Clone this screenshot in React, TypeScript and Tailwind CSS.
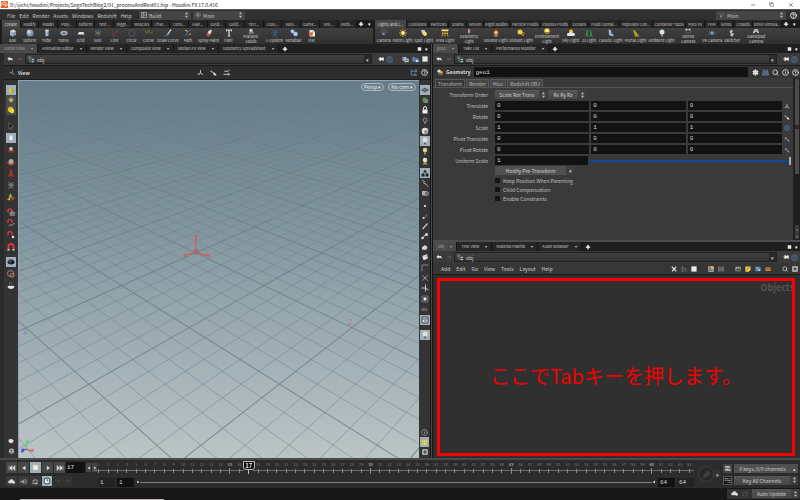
import React, { useState } from 'react';
import { Minus, Plus, Copy, X, CircleHelp, Info, Search, Settings, Pin, KeyRound, RefreshCw } from 'lucide-react';

/* ---------- glyphs, all on a 16x16 canvas ---------- */

const glyphs: Record<string, React.ReactNode> = {
  box: <><path d="M2 4 8 1l6 3v8l-6 3-6-3z" fill="#8b97a5" /><path d="M2 4l6 3 6-3-6-3z" fill="#d5dbe2" /><path d="M8 7v8l-6-3V4z" fill="#aab4c0" /></>,
  sphere: <><circle cx="8" cy="8" r="7" fill="#8795a8" /><circle cx="6" cy="5.5" r="4" fill="#c6ced9" /></>,
  tube: <><path d="M4 3h8v10c0 2-8 2-8 0z" fill="#6c7f96" /><path d="M6 3h3v11H6z" fill="#bdc9d6" /><ellipse cx="8" cy="3" rx="4" ry="2" fill="#cdd5de" /></>,
  torus: <ellipse cx="8" cy="8" rx="5.5" ry="3" fill="none" stroke="#a3b3c7" strokeWidth="3.5" />,
  grid: <path d="M4 6h9l2 5H1z" fill="#dfe3e6" />,
  nul: <g strokeWidth="1.8"><path d="M8 1v14" stroke="#3f83c9" /><path d="M2 5l12 6" stroke="#c8503c" /><path d="M2 11l12-6" stroke="#4ea34b" /></g>,
  line: <><path d="M3 1v13h12" stroke="#4b4b4b" fill="none" /><path d="M3 14 13 3" stroke="#b24a3a" strokeWidth="1.5" /></>,
  circle: <circle cx="8" cy="8" r="6.5" fill="none" stroke="#506379" strokeWidth="1.5" />,
  curve: <path d="M1 4c3 14 5-7 7-1s3 9 7 2" fill="none" stroke="#9a7a43" strokeWidth="1.6" />,
  draw: <><path d="M1 13c4-3 4 3 8-1" stroke="#3f86d8" strokeWidth="2" fill="none" /><path d="M7 11 14 1" stroke="#dcdcdc" strokeWidth="2.6" /></>,
  path: <><path d="M2 14C7 12 5 5 13 2" stroke="#3f86d8" strokeWidth="2" fill="none" /><path d="M2 3h4v3M9 12l5-3" stroke="#e1b34b" strokeWidth="1.8" fill="none" /></>,
  spray: <><path d="M7 4l5-3 2 3-6 11-5-3z" fill="#d9d9d9" /><path d="M5 8l5 3-2 4-5-3z" fill="#c33b2d" /></>,
  font: <path d="M2 1h12v4h-1.5L11.500 3H9.300v10.500L11 14v1H5v-1l1.700-.5V3H4.500l-1 2H2z" fill="#cfd7df" />,
  solids: <><path d="M8 1l5 4-2 6H5L3 5z" fill="#c9c9c9" /><path d="M1 15l4-5 4 5zM9 10h6v5H9z" fill="#8d8d8d" /></>,
  lsys: <path d="M8 15V6M8 10 3 6M8 10l5-4M8 7 5 2M8 7l4-5M3 6 1 7M13 6l2 1M4 12l4 1 4-1" stroke="#35689e" strokeWidth="1.600" fill="none" />,
  meta: <><circle cx="5" cy="5" r="4" fill="#8fb4e0" /><circle cx="11" cy="10" r="4.500" fill="#a9c6ea" /><circle cx="4" cy="4" r="1.500" fill="#fff" /></>,
  file: <><path d="M3 2h7l4 4v9H3z" fill="#e6e6e6" /><path d="M2 8l8-3-1 8-6 1z" fill="#e46a2e" /></>,
  camera: <><path d="M1 6h11v7H1z" fill="#363f48" /><circle cx="5" cy="4" r="3" fill="none" stroke="#6a7683" /><circle cx="11" cy="5" r="3" fill="none" stroke="#6a7683" /><circle cx="7" cy="10" r="2.500" fill="#78909f" /></>,
  point: <><path d="M8 0v16M0 8h16M2 2l12 12M14 2 2 14" stroke="#e8c631" strokeWidth="1.500" /><circle cx="8" cy="8" r="3.500" fill="#fff6a8" /></>,
  spot: <><path d="M2 2h7l3 6-7 3z" fill="#cfcfcf" /><circle cx="10" cy="10" r="4" fill="#f2dc62" /></>,
  area: <><path d="M1 1h14v3H1z" fill="#f4e68b" /><path d="M4 4 2 15M8 4v11M12 4l2 11M2 9h12" stroke="#e0b51f" strokeWidth="1.500" /></>,
  geolight: <><path d="M8 1c4 3 4 7 2 13H6C4 8 5 4 8 1z" fill="#b89fb4" /><path d="M8 4v10" stroke="#e07830" strokeWidth="2" /></>,
  volume: <><path d="M8 1c5 1 6 6 4 10H4C2 6 4 3 8 1z" fill="#d84f30" /><circle cx="8" cy="7" r="3" fill="#ffd25b" /><path d="M4 11h8v4H4z" fill="#8b8b8b" /></>,
  distant: <><circle cx="6" cy="6" r="5" fill="#f0cf3a" /><path d="M8 9l6 5M11 6l4 4" stroke="#f7ab2f" strokeWidth="2" /></>,
  env: <><circle cx="8" cy="8" r="7.500" fill="#e4c529" /><circle cx="8" cy="7" r="3.500" fill="#fff8c8" /><path d="M2 11h12l-3 3H5z" fill="#6d6420" /></>,
  sky: <><circle cx="8" cy="5" r="4" fill="#f4c53a" /><path d="M2 14a3 3 0 0 1 2-6 4 4 0 0 1 7 0 3 3 0 0 1 3 6z" fill="#dfe6ed" /></>,
  gi: <><path d="M3 3h10l2 12H1z" fill="#3c7d4b" /><path d="M6 4h4v11H6z" fill="#2a4b33" /></>,
  caustic: <path d="M3 1l5 1 1 7 5 3-3 3-7-3z" fill="#9fb2d6" />,
  portal: <path d="M2 2l4 1 9 12H6z" fill="#a3a32b" />,
  bulb: <><circle cx="8" cy="6" r="5" fill="#d3ebe8" /><path d="M6 10h4v5H6z" fill="#999" /></>,
  stereo: <><path d="M1 7h14v7H1z" fill="#56616c" /><circle cx="4" cy="4" r="3" fill="#c6c6c6" /><circle cx="12" cy="4" r="3" fill="#c6c6c6" /><circle cx="5" cy="10" r="2" fill="#1d2329" /><circle cx="11" cy="10" r="2" fill="#1d2329" /></>,
  vr: <><path d="M1 6c4-4 10-4 14 0v6H1z" fill="#46525e" /><circle cx="8" cy="8" r="3" fill="#83a0bd" /></>,
  switcher: <path d="M6 1l4 3-3 3 5 3-3 5-5-2 2-3-3-4z" fill="#c2c2c2" />,
  gamepad: <><path d="M3 3h10l3 11-4-1-2-3H6l-2 3-4 1z" fill="#dcdcdc" /><circle cx="5" cy="7" r="1.500" fill="#555" /><circle cx="11" cy="7" r="1.500" fill="#c44" /></>,
  arrowL: <path d="M1 7l6-5v3h6c2 0 2 6 1 9-1-3-2-4-4-4H7v3z" fill="#e2e2e2" />,
  arrowR: <path d="M15 8l-5-5v3H3v4h7v3z" fill="#555" />,
  obj: <><path d="M1 2h6v3H1zM4 5v7h3" stroke="#7e98a5" fill="none" strokeWidth="1.500" /><path d="M8 6h6v3H8zM8 11h6v3H8z" fill="#a9bac3" /></>,
  target: <><circle cx="8" cy="8" r="7" fill="#3a4554" stroke="#61748c" strokeWidth="1.500" /><circle cx="8" cy="8" r="3.500" fill="none" stroke="#7189a8" /></>,
  cubes: <><path d="M1 2h9v9H1z" fill="#8fa6c4" /><path d="M6 6h9v8H6z" fill="#dbe4ee" /><path d="M8 8h5v4H8z" fill="#405a86" /></>,
  cubes2: <><path d="M1 2h6v11H1z" fill="#6f7f93" /><circle cx="10" cy="9" r="5" fill="#4f7ec2" /><path d="M9 9h6v5H9z" fill="#d6d6d6" /></>,
  square: <path d="M1 1h14v14H1z" fill="#e9e9e9" />,
  axis: <><path d="M8 2v7M8 9l-6 4M8 9l6 4" stroke="#d0d0d0" strokeWidth="2" fill="none" /><circle cx="5" cy="11" r="2.500" fill="#6c95cf" /></>,
  axis2: <><path d="M1 4l8 6 5 4" stroke="#9db9dc" strokeWidth="2.400" fill="none" /><path d="M9 7l6 7H8z" fill="#eee" /></>,
  axis3: <path d="M1 12h13M3 5h9l3-3M12 9l3 3-3 3" stroke="#b9cde6" strokeWidth="2.200" fill="none" />,
  pivot: <><circle cx="5" cy="6" r="3" fill="#6c95cf" /><path d="M8 9l6 5" stroke="#c4c4c4" strokeWidth="2.500" /></>,
  viewAxis: <path d="M10 2v9M10 10 3 7M10 10l5 3" stroke="#7d93a8" strokeWidth="2" fill="none" />,
  tree: <path d="M3 1v13h5M3 5h6M11 2h4v4h-4zM10 11h4v4h-4z" stroke="#6b98cb" strokeWidth="1.800" fill="none" />,
  cone: <><path d="M8 2l5 11H2z" fill="#e9c51f" /><path d="M9 4l5 9h-4z" fill="#a58f36" /></>,
  diamond: <><path d="M8 2l6 5-6 4-6-4z" fill="#8c8c8c" /><circle cx="8" cy="9" r="3.500" fill="#c9b64f" /></>,
  gold: <><circle cx="7" cy="7" r="5.500" fill="#d9bd19" /><circle cx="10" cy="10" r="4.500" fill="#f0d837" /></>,
  pointer: <path d="M4 1l9 9H9l2 5-2.500 1L6.500 11 4 13z" fill="#0c0c0c" stroke="#8a8a8a" strokeWidth="1.200" />,
  hand: <path d="M4 7c0-3 1-5 4-5s4 2 4 5v6H4z" fill="#e8eef1" stroke="#8fa0a8" />,
  move: <><circle cx="8" cy="6" r="4" fill="#b8c1cc" /><path d="M0 10l6-4v8zM16 10l-6-4v8z" fill="#c4271c" /></>,
  rotate: <><circle cx="8" cy="7" r="5" fill="#a3acb8" /><path d="M0 8c2 9 14 9 16 0l-4 1c-2 4-6 4-8 0z" fill="#cc4a1e" /></>,
  scale: <><path d="M8 0l4 5H4zM3 11h10l1 4H2z" fill="#bb251c" /><path d="M5 5h6v7H5z" fill="#7c4848" /></>,
  pose: <path d="M3 2l5 5 4-5M8 7v4l-5 4M8 11l5 3M2 8h12" stroke="#b9a5a5" strokeWidth="1.500" fill="none" />,
  handles: <><path d="M7 0l4 9H3z" fill="#91c638" /><path d="M7 8l9 1-4 6z" fill="#d33c2a" /><path d="M7 8l-7 5 6 2z" fill="#d8bc2d" /></>,
  magGrid: <><path d="M2 9V6a4 4 0 0 1 8 0v3" stroke="#d5363b" strokeWidth="3" fill="none" /><path d="M6 8h9v7H6zM9 8v7M12 8v7M6 11h9" stroke="#bbb" fill="none" /></>,
  magCurve: <><path d="M2 8V5a4 4 0 0 1 8 0v3" stroke="#d5363b" strokeWidth="3" fill="none" /><path d="M3 14c4-5 7 2 12-6" stroke="#bbb" fill="none" strokeWidth="1.500" /></>,
  magPoint: <><path d="M2 8V5a4 4 0 0 1 8 0v3" stroke="#d5363b" strokeWidth="3" fill="none" /><circle cx="12" cy="12" r="2.500" fill="#e3e3e3" /></>,
  magnet: <><path d="M3 12V7a5 5 0 0 1 10 0v5" stroke="#d5363b" strokeWidth="4" fill="none" /><path d="M1 12h4v3H1zM11 12h4v3h-4z" fill="#ddd" /></>,
  render: <><ellipse cx="8" cy="8" rx="7" ry="5" fill="#22303a" /><path d="M4 3h6v6H4z" fill="#3e4d59" /><circle cx="11" cy="9" r="3" fill="#11181d" /></>,
  region: <><circle cx="7" cy="7" r="6" fill="none" stroke="#9aa5ac" strokeWidth="1.600" /><path d="M7 7h7v7H7z" fill="none" stroke="#cf7268" strokeWidth="1.500" /></>,
  bowl: <><path d="M5 1h4l1 7H5z" fill="#2d3a42" stroke="#73838d" /><path d="M1 8h14c0 8-14 8-14 0z" fill="#dde3e6" /></>,
  chip: <><path d="M2 3l6-1 5 3-2 6-6 1-4-4z" fill="#dce3e8" /><path d="M8 9h5l-3 5z" fill="#c94c3b" /></>,
  ball: <><circle cx="8" cy="7" r="6" fill="#b7b7b7" /><path d="M3 6h10M5 10h6M8 2v10" stroke="#444" /></>,
  plane: <path d="M1 8l7-4 7 4-7 4z" fill="#5e7079" stroke="#2b3337" />,
  green: <><circle cx="7" cy="7" r="5" fill="#4c7a4a" /><path d="M5 6h9v8H5z" fill="#6d8a6b" /></>,
  lock: <><path d="M5 7V4a3 3 0 0 1 6 0v3" stroke="#eee" strokeWidth="2" fill="none" /><path d="M3 7h10v8H3z" fill="#eee" /></>,
  dimBulb: <><circle cx="8" cy="6" r="4" fill="none" stroke="#aaa" strokeWidth="1.500" /><path d="M7 10h2v4H7z" fill="#aaa" /></>,
  shade: <><circle cx="8" cy="8" r="6.500" fill="#e0e0e0" /><circle cx="10" cy="10" r="4" fill="#8d9aa0" /></>,
  lampA: <><circle cx="8" cy="6" r="5" fill="#e3ded4" /><path d="M6 11h4v4H6z" fill="#6b6b6b" /></>,
  lampB: <><circle cx="8" cy="6" r="4.500" fill="#d4d692" /><path d="M6 10h4v5H6z" fill="#8a8a63" /></>,
  lampC: <><circle cx="8" cy="6" r="4.500" fill="#e4e5ba" /><path d="M3 15l3-5h4l3 5z" fill="#9b9b70" /></>,
  tri: <path d="M8 1l4 6H4zM1 9h6v6H1zM9 9h6v6H9z" fill="#18242b" />,
  link: <path d="M2 2l5 3-2 3 5 2 4 5" stroke="#aaa" strokeWidth="2" fill="none" />,
  stack: <><path d="M2 4h8v9H2z" fill="#aaa" /><circle cx="11" cy="9" r="4" fill="#666" stroke="#ccc" /></>,
  dot: <circle cx="8" cy="8" r="2.200" fill="#f2f2f2" />,
  check: <><path d="M3 10l3 3 6-8" stroke="#999" strokeWidth="1.400" fill="none" /><circle cx="5" cy="12" r="1.800" fill="#ddd" /></>,
  slash: <path d="M3 14 13 3" stroke="#c9c9c9" strokeWidth="2.400" />,
  nums: <><path d="M2 14l6-8" stroke="#ccc" strokeWidth="2" /><circle cx="11" cy="5" r="3" fill="#ddd" /><circle cx="3" cy="12" r="2.500" fill="#ddd" /></>,
  face: <path d="M2 8l7-4 4 5-3 5-8-1z" fill="#d4d4d4" />,
  faceNum: <><path d="M2 6l10-4 2 9-8 3z" fill="#c8c8c8" /><path d="M4 8h5v5H4z" fill="#efefef" /></>,
  corner: <path d="M2 15V2h13" stroke="#989898" strokeWidth="1.600" fill="none" />,
  cross: <path d="M2 2l12 12M14 2 2 14M5 8h6M8 5v6" stroke="#9a9a9a" strokeWidth="1.500" />,
  branch: <path d="M9 1v14M9 8H1M9 8l6 4" stroke="#d4d4d4" strokeWidth="1.800" fill="none" />,
  frame: <><path d="M2 2h12v12H2z" fill="none" stroke="#858585" strokeWidth="1.500" /><path d="M5 5h6v6H5z" fill="#e8e8e8" /></>,
  display: <path d="M2 2h12v12H2zM3 6h10M6 10h5" stroke="#2e3a41" strokeWidth="1.800" fill="#dfe6ea" />,
  yellowGrid: <><path d="M2 2h12v12H2z" fill="#f1efd0" stroke="#bcae2f" strokeWidth="1.800" /><path d="M6 2v12M10 2v12M2 8h12" stroke="#bcae2f" strokeWidth="1.600" /></>,
  snap: <><path d="M1 1h14v14H1z" fill="#eee" /><path d="M4 4h8v8H4z" fill="#222" /><path d="M8 6l2 3H6z" fill="#fff" /></>,
  wrench: <path d="M2 2l12 12M14 2 3 14" stroke="#dedede" strokeWidth="3" />,
  treeW: <path d="M3 1v14M3 5h4M3 13h6M8 7h5v8" stroke="#a5a5a5" strokeWidth="1.600" fill="none" />,
  palette: <><path d="M1 1h14v14H1z" fill="#ddd" /><path d="M2 2h6v6H2z" fill="#d5524a" /><path d="M8 2h6v6H8z" fill="#e0ba49" /><path d="M2 8h6v6H2z" fill="#4b82c8" /><path d="M8 8h6v6H8z" fill="#58a35a" /></>,
  cells: <path d="M1 2h5v12H1zM10 2h5v12h-5zM1 6h5M1 10h5M10 6h5M10 10h5" stroke="#949494" strokeWidth="1.500" fill="none" />,
  image: <><path d="M1 2h14v12H1z" fill="#9c9c9c" /><path d="M2 12l5-6 3 3 3-5v8z" fill="#3b3b3b" /></>,
  note: <><path d="M1 1h14v9l-5 5H1z" fill="#ecd04a" /><path d="M4 10l8-7" stroke="#5e521b" strokeWidth="2" /></>,
  world: <><path d="M1 2h14v12H1z" fill="#4f86c9" /><path d="M3 3h5l-2 6zM9 8h5v5H9z" fill="#b8cf8a" /></>,
  basket: <><path d="M1 4h14v9H1z" fill="#d48f3c" /><path d="M1 8h14" stroke="#6d431b" strokeWidth="2" /></>,
  binoc: <path d="M3 2h3v5h4V2h3l2 12H9v-4H7v4H1z" fill="#4c6485" stroke="#8fa8c9" strokeWidth=".8" />,
  geo: <><circle cx="5" cy="5" r="4" fill="#e3e3e3" /><path d="M7 5h6v6H7z" fill="#ddb52b" /><path d="M8 9h6l-2 5H6z" fill="#d2401f" /><path d="M2 8h5v5H2z" fill="#3e6cb0" /></>,
  first: <path d="M2 3v10M8 3v10L3 8zM14 3v10L9 8z" fill="#ddd" stroke="#ddd" />,
  rew: <path d="M12 2v12L3 8z" fill="#ddd" />,
  stop: <path d="M2 2h12v12H2z" fill="#f0efe6" stroke="#aaa294" />,
  play: <path d="M5 2v12l8-6z" fill="#ddd" />,
  last: <path d="M14 3v10M2 3v10l5-5zM8 3v10l5-5z" fill="#ddd" stroke="#ddd" />,
  speaker: <><path d="M1 6h4l5-4v12l-5-4H1z" fill="#999" /><path d="M12 3c3 3 3 7 0 10" stroke="#bbb" strokeWidth="2" fill="none" /></>,
  loop: <path d="M2 9c0-6 11-6 11-1M1 12h11l-3-3M12 12l-3 3" stroke="#ccc" strokeWidth="2" fill="none" />,
  clock: <><circle cx="8" cy="8" r="6" fill="#f3f3f3" stroke="#37444b" strokeWidth="2" /><path d="M8 4v4h3" stroke="#37444b" strokeWidth="1.500" fill="none" /></>,
  tiny: <path d="M3 4v8M12 4v8L6 8z" fill="#4e5b4c" stroke="#4e5b4c" />,
  keys: <><path d="M2 2h12v5H2z" fill="#9bb59a" /><path d="M2 9h9v4H2z" fill="#c8c8c8" /><path d="M8 8l6 6M14 8v6" stroke="#eee" strokeWidth="1.500" /></>,
  bars: <><path d="M1 4h8M10 8h5" stroke="#ddb148" strokeWidth="2" /><path d="M1 8h8M8 12h7M10 4h5" stroke="#5989c9" strokeWidth="2" /></>,
  cloud: <path d="M2 12a4 4 0 0 1 2-7 5 5 0 0 1 9 2 3 3 0 0 1 0 6l-3-1z" fill="#ddd" />,
};

function Glyph({ name, className = 'size-2' }: { name: string; className?: string }) {
  return (
    <svg viewBox="0 0 16 16" className={`shrink-0 ${className}`} aria-hidden="true">
      {glyphs[name]}
    </svg>
  );
}

function IconButton({ name, label, className = '', size = 'size-2' }: { name: string; label: string; className?: string; size?: string }) {
  return (
    <button type="button" aria-label={label} className={`flex shrink-0 items-center justify-center ${className}`}>
      <Glyph name={name} className={size} />
    </button>
  );
}

/* ---------- shelves ---------- */

const leftTabs = ['Create', 'Modify', 'Model', 'Poly...', 'Deform', 'Text...', 'Riggi...', 'Muscles', 'Char...', 'Cons...', 'Hair...', 'Guid...', 'Guid...', 'Terr...', 'Clou...', 'Volu...', 'Game...', 'Vell...', 'Reds...'].map((label) => ({ label, w: 'flex-1' }));

const leftTools = [
  { label: 'Box', icon: 'box', w: 'w-[17px]' },
  { label: 'Sphere', icon: 'sphere', w: 'w-[17px]' },
  { label: 'Tube', icon: 'tube', w: 'w-[17px]' },
  { label: 'Torus', icon: 'torus', w: 'w-[17px]' },
  { label: 'Grid', icon: 'grid', w: 'w-[17px]' },
  { label: 'Null', icon: 'nul', w: 'w-[17px]' },
  { label: 'Line', icon: 'line', w: 'w-[17px]' },
  { label: 'Circle', icon: 'circle', w: 'w-[17px]' },
  { label: 'Curve', icon: 'curve', w: 'w-[17px]' },
  { label: 'Draw Curve', icon: 'draw', w: 'w-[22px]' },
  { label: 'Path', icon: 'path', w: 'w-[18px]' },
  { label: 'Spray Paint', icon: 'spray', w: 'w-[23px]' },
  { label: 'Font', icon: 'font', w: 'w-[17px]' },
  { label: 'Platonic Solids', icon: 'solids', w: 'w-[28px]' },
  { label: 'L-System', icon: 'lsys', w: 'w-[19px]' },
  { label: 'Metaball', icon: 'meta', w: 'w-[19px]' },
  { label: 'File', icon: 'file', w: 'w-[17px]' },
];

const rightTabs = [
  { label: 'Lights and C...', w: 'w-[32px]' },
  { label: 'Collisions', w: 'w-[22px]' },
  { label: 'Particles', w: 'w-[20px]' },
  { label: 'Grains', w: 'w-[18px]' },
  { label: 'Vellum', w: 'w-[17px]' },
  { label: 'Rigid Bodies', w: 'w-[26px]' },
  { label: 'Particle Fluids', w: 'w-[31px]' },
  { label: 'Viscous Fluids', w: 'w-[29px]' },
  { label: 'Oceans', w: 'w-[19px]' },
  { label: 'Fluid Contai...', w: 'w-[31px]' },
  { label: 'Populate Con...', w: 'w-[33px]' },
  { label: 'Container Tools', w: 'w-[33px]' },
  { label: 'Pyro FX', w: 'w-[19px]' },
  { label: 'FEM', w: 'w-[14px]' },
  { label: 'Wires', w: 'w-[15px]' },
  { label: 'Crowds', w: 'w-[19px]' },
  { label: 'Drive Simula...', w: 'w-[29px]' },
];

const rightTools = [
  { label: 'Camera', icon: 'camera', w: 'w-[17px]' },
  { label: 'Point Light', icon: 'point', w: 'w-[21px]' },
  { label: 'Spot Light', icon: 'spot', w: 'w-[21px]' },
  { label: 'Area Light', icon: 'area', w: 'w-[22px]' },
  { label: 'Geometry Light', icon: 'geolight', w: 'w-[26px]' },
  { label: 'Volume Light', icon: 'volume', w: 'w-[27px]' },
  { label: 'Distant Light', icon: 'distant', w: 'w-[24px]' },
  { label: 'Environment Light', icon: 'env', w: 'w-[28px]' },
  { label: 'Sky Light', icon: 'sky', w: 'w-[19px]' },
  { label: 'GI Light', icon: 'gi', w: 'w-[18px]' },
  { label: 'Caustic Light', icon: 'caustic', w: 'w-[25px]' },
  { label: 'Portal Light', icon: 'portal', w: 'w-[25px]' },
  { label: 'Ambient Light', icon: 'bulb', w: 'w-[27px]' },
  { label: 'Stereo Camera', icon: 'stereo', w: 'w-[26px]' },
  { label: 'VR Camera', icon: 'vr', w: 'w-[22px]' },
  { label: 'Switcher', icon: 'switcher', w: 'w-[18px]' },
  { label: 'Gamepad Camera', icon: 'gamepad', w: 'w-[30px]' },
];

const stacked = ['Platonic Solids', 'Geometry Light', 'Environment Light', 'Stereo Camera', 'Gamepad Camera'];

type ShelfProps = {
  tabs: { label: string; w: string }[];
  tools: { label: string; icon: string; w: string }[];
  className: string;
  toolsClass?: string;
};

function Shelf({ tabs, tools, className, toolsClass = '' }: ShelfProps) {
  return (
    <section className={`flex min-w-0 flex-col overflow-hidden border-l-2 border-[#1c1c1c] bg-[#2f2f2f] ${className}`}>
      <div className="flex h-2 bg-[#1b1b1b] text-[4px] leading-[8px] text-[#c4c4c4]">
        {tabs.map((tab, i) => (
          <button
            key={i}
            type="button"
            className={`shrink-0 border-r border-[#141414] text-center whitespace-nowrap ${tab.w} ${i === 0 ? 'bg-[#474747] text-[#dcdcdc]' : 'bg-[#272727]'}`}
          >
            {tab.label}
          </button>
        ))}
        <button type="button" aria-label="Add shelf" className="flex w-2 shrink-0 items-center justify-center text-white"><Plus className="size-[6px]" strokeWidth={5} /></button>
        <button type="button" aria-label="Shelf menu" className="w-2 shrink-0 text-[5px] text-white">▾</button>
      </div>
      <div className={`flex h-4 bg-linear-to-b from-[#404040] to-[#303030] ${toolsClass}`}>
        {tools.map((tool) => (
          <button key={tool.label} type="button" className={`flex shrink-0 flex-col items-center text-[4px] text-[#cfcfcf] ${tool.w}`}>
            {stacked.includes(tool.label) ? (
              <>
                <Glyph name={tool.icon} className="size-[6px]" />
                <span className="text-center leading-[5px]">
                  {tool.label.split(' ').map((word) => <span key={word} className="block">{word}</span>)}
                </span>
              </>
            ) : (
              <>
                <Glyph name={tool.icon} className="mt-px size-2" />
                <span className="leading-[6px] whitespace-nowrap">{tool.label}</span>
              </>
            )}
          </button>
        ))}
      </div>
    </section>
  );
}

/* ---------- pane chrome ---------- */

function PaneTabs({ tabs }: { tabs: string[] }) {
  return (
    <div className="flex h-[9px] shrink-0 items-stretch bg-[#1f1f1f] text-[4px] leading-[9px] text-[#c8c8c8]">
      {tabs.map((tab, i) => (
        <button
          key={tab}
          type="button"
          className={`flex shrink-0 items-center gap-[6px] border-r border-[#161616] px-1 whitespace-nowrap ${i === 0 ? 'bg-[#4a4a4a] text-[#a4a4a4]' : 'bg-[#262626]'}`}
        >
          {tab}
          <span>▾</span>
        </button>
      ))}
      <button type="button" aria-label="New tab" className="flex items-center px-[3px] text-white"><Plus className="size-[6px]" strokeWidth={5} /></button>
      <span className="flex-1" />
      <IconButton name="square" label="Maximize pane" size="w-[5px] h-1" />
      <button type="button" aria-label="Pane menu" className="w-2 text-[5px] text-white">▾</button>
    </div>
  );
}

function PathBar({ extra = false }: { extra?: boolean }) {
  return (
    <div className="flex h-3 shrink-0 items-center bg-[#3b3b3b] pr-px">
      <IconButton name="arrowL" label="Back" className="w-[11px]" size="size-[6px]" />
      <IconButton name="arrowR" label="Forward" className="w-[10px]" size="size-[6px]" />
      <button type="button" className="flex h-[10px] min-w-0 flex-1 items-center gap-[2px] border border-[#222] bg-linear-to-b from-[#404040] to-[#343434] pl-[2px] text-[5px] leading-none text-[#cfcfcf]">
        <Glyph name="obj" className="size-[7px]" />
        <span className="flex-1 text-left">obj</span>
        <span className="flex h-2 w-[7px] items-center justify-center bg-[#2b2b2b] text-[5px]">▾</span>
      </button>
      <button type="button" aria-label="Pin" className="ml-1 flex w-[9px] justify-center">
        <Pin className="size-[6px] rotate-90 fill-white text-white" />
      </button>
      <IconButton name="target" label="Follow selection" className="w-[9px]" size="size-[7px]" />
      {extra && (
        <>
          <IconButton name="cubes" label="Snapshot" className="ml-[6px] w-[10px]" size="size-[7px]" />
          <IconButton name="cubes2" label="Flipbook" className="w-[10px]" size="size-[7px]" />
          <IconButton name="square" label="Layout" className="w-[9px]" size="size-[6px]" />
        </>
      )}
    </div>
  );
}

/* ---------- scene view ---------- */

// ground plane -> view canvas
function project(x: number, z: number) {
  const w = 1 - 0.112 * x - 0.1127 * z;
  return [(587 + 116 * x - 263 * z) / w, (545 + 26 * x + 25.5 * z) / w];
}

function groundLines(step: number, keep: (i: number) => boolean) {
  let d = '';
  for (let i = -130; i <= 40; i++) {
    if (!keep(i)) continue;
    const c = i * step;
    const xEnd = (1 - 0.1127 * c - 0.2) / 0.112;
    const zEnd = (1 - 0.112 * c - 0.2) / 0.1127;
    if (xEnd > -26) {
      const a = project(-26, c);
      const b = project(xEnd, c);
      d += `M${a[0].toFixed(1)} ${a[1].toFixed(1)}L${b[0].toFixed(1)} ${b[1].toFixed(1)}`;
    }
    if (zEnd > -26) {
      const a = project(c, -26);
      const b = project(c, zEnd);
      d += `M${a[0].toFixed(1)} ${a[1].toFixed(1)}L${b[0].toFixed(1)} ${b[1].toFixed(1)}`;
    }
  }
  return d;
}

const minorGrid = groundLines(0.2, (i) => i % 5 !== 0);
const majorGrid = groundLines(0.2, (i) => i % 5 === 0);

const gridLabels = [
  { x: 90, y: 299, t: '-4', c: '#8d7f86', s: 12 },
  { x: 184, y: 344, t: '-3', c: '#8d7f86', s: 14 },
  { x: 295, y: 396, t: '-2', c: '#96808a', s: 16 },
  { x: 425, y: 460, t: '-1', c: '#96808a', s: 16 },
  { x: 792, y: 636, t: '1', c: '#a18a8e', s: 18 },
  { x: 1050, y: 762, t: '2', c: '#a87f83', s: 24 },
  { x: 1217, y: 264, t: '-5', c: '#6f8196', s: 12 },
  { x: 1130, y: 304, t: '-4', c: '#6f8196', s: 13 },
  { x: 1028, y: 351, t: '-3', c: '#6f8196', s: 14 },
  { x: 907, y: 407, t: '-2', c: '#6a7f98', s: 18 },
  { x: 762, y: 472, t: '-1', c: '#6a7f98', s: 18 },
  { x: 365, y: 654, t: '1', c: '#7186a0', s: 18 },
  { x: 76, y: 788, t: '2', c: '#7487a0', s: 24 },
];

function Viewport() {
  return (
    <div className="relative min-w-0 flex-1 overflow-hidden border-t border-l border-[#8ba3b2] bg-[#8a9ca5]">
      <svg viewBox="54 30 1206 1130" preserveAspectRatio="xMidYMid slice" className="absolute inset-0 size-full" role="img" aria-label="Scene">
        <defs>
          <linearGradient id="sky" x1="0" y1="0" x2="0" y2="1">
            <stop offset="0" stopColor="#667b89" />
            <stop offset="0.4" stopColor="#82969f" />
            <stop offset="0.72" stopColor="#a2b0b6" />
            <stop offset="1" stopColor="#bfc7c7" />
          </linearGradient>
          <linearGradient id="fade" x1="0" y1="0" x2="0" y2="1">
            <stop offset="0" stopColor="#fff" stopOpacity="0.15" />
            <stop offset="0.2" stopColor="#fff" stopOpacity="0.5" />
            <stop offset="0.5" stopColor="#fff" stopOpacity="0.85" />
            <stop offset="1" stopColor="#fff" />
          </linearGradient>
          <mask id="fog" maskUnits="userSpaceOnUse" x="0" y="0" width="1300" height="1200">
            <rect x="0" y="30" width="1300" height="1170" fill="url(#fade)" />
          </mask>
        </defs>
        <rect x="0" y="0" width="1300" height="1200" fill="url(#sky)" />
        <g mask="url(#fog)" fill="none">
          <path d={minorGrid} stroke="#667a82" strokeOpacity="0.55" strokeWidth="2.6" />
          <path d={majorGrid} stroke="#5c7078" strokeOpacity="0.7" strokeWidth="3" />
        </g>
        <g fontFamily="Lato, sans-serif" textAnchor="middle">
          {gridLabels.map((l, i) => (
            <text key={i} x={l.x} y={l.y} fontSize={l.s} fill={l.c}>{l.t}</text>
          ))}
        </g>
        <circle cx="589" cy="542" r="9" fill="#5f7696" fillOpacity="0.6" />
        <g stroke="#d95757" strokeWidth="3.500" fill="none">
          <path d="M587 543V500M587 543l-30 9M587 543l36 11" />
          <path d="M584 491l5 7 5-8M551 549l7 7M558 549l-7 7M622 549l6 8M629 549l-7 8" />
        </g>
        <g strokeWidth="3" fill="none">
          <path d="M79 1134V1114M78 1107l5 6 3-7" stroke="#48e04c" />
          <path d="M79 1134l14 4M94 1134l7 7M101 1134l-7 7" stroke="#e24a4a" />
          <path d="M79 1134l-10 4M64 1134h7l-6 7h7" stroke="#3c3ce0" />
        </g>
      </svg>
      <div className="absolute top-[2px] right-[3px] flex gap-1 text-[5px] leading-[6px] text-[#e3e8ea]">
        <button type="button" className="rounded-full border border-[#a9b5bc] bg-[#6e7f8a] px-[2px]">Persp ▾</button>
        <button type="button" className="rounded-full border border-[#a9b5bc] bg-[#6e7f8a] px-[2px]">No cam ▾</button>
      </div>
    </div>
  );
}

type Tool = { icon: string; label: string; h: string; on?: boolean; box?: boolean };

const sceneTools: Tool[] = [
  { icon: 'cone', label: 'Objects', h: 'h-[10px]', on: true },
  { icon: 'diamond', label: 'Geometry', h: 'h-[10px]', box: true },
  { icon: 'gold', label: 'Dynamics', h: 'h-[10px]', box: true },
  { icon: 'pointer', label: 'Select', h: 'h-[16px]' },
  { icon: 'hand', label: 'Secure selection', h: 'h-[12px]', on: true },
  { icon: 'move', label: 'Move', h: 'h-[12px]' },
  { icon: 'rotate', label: 'Rotate', h: 'h-[12px]' },
  { icon: 'scale', label: 'Scale', h: 'h-[11px]' },
  { icon: 'pose', label: 'Pose', h: 'h-[12px]' },
  { icon: 'handles', label: 'Handles', h: 'h-[12px]' },
  { icon: 'magGrid', label: 'Snap to grid', h: 'h-[15px]' },
  { icon: 'magCurve', label: 'Snap to curve', h: 'h-[11px]' },
  { icon: 'magPoint', label: 'Snap to point', h: 'h-[12px]' },
  { icon: 'magnet', label: 'Multi snap', h: 'h-[12px]' },
  { icon: 'render', label: 'View', h: 'h-[15px]', on: true },
  { icon: 'region', label: 'Render region', h: 'h-[12px]' },
  { icon: 'bowl', label: 'Render', h: 'h-[12px]' },
];

const displayTools: Tool[] = [
  { icon: 'plane', label: 'Reference plane', h: 'h-[10px]', on: true },
  { icon: 'green', label: 'Ghost objects', h: 'h-[10px]' },
  { icon: 'lock', label: 'Lock camera', h: 'h-[10px]' },
  { icon: 'dimBulb', label: 'No lighting', h: 'h-[11px]' },
  { icon: 'shade', label: 'Shading', h: 'h-[10px]' },
  { icon: 'lampA', label: 'Headlight', h: 'h-[10px]', on: true },
  { icon: 'lampB', label: 'Normal lighting', h: 'h-[10px]' },
  { icon: 'lampC', label: 'High quality lighting', h: 'h-[10px]' },
  { icon: 'tri', label: 'Materials', h: 'h-[12px]', on: true },
  { icon: 'link', label: 'Visibility', h: 'h-[10px]' },
  { icon: 'stack', label: 'Display mode', h: 'h-[10px]' },
  { icon: 'dot', label: 'Points', h: 'h-[13px]' },
  { icon: 'check', label: 'Point normals', h: 'h-[10px]' },
  { icon: 'slash', label: 'Point trails', h: 'h-[10px]' },
  { icon: 'nums', label: 'Point numbers', h: 'h-[10px]' },
  { icon: 'face', label: 'Primitive normals', h: 'h-[11px]' },
  { icon: 'faceNum', label: 'Primitive numbers', h: 'h-[10px]' },
  { icon: 'corner', label: 'Profiles', h: 'h-[11px]' },
  { icon: 'cross', label: 'Hulls', h: 'h-[10px]' },
  { icon: 'branch', label: 'Vertices', h: 'h-[10px]' },
  { icon: 'frame', label: 'Prim centers', h: 'h-[11px]' },
  { icon: 'abc', label: 'Names', h: 'h-[10px]' },
  { icon: 'display', label: 'Group list', h: 'h-[11px]', on: true },
  { icon: 'lampA', label: 'Visualizers', h: 'h-[15px]', on: true },
];

function ToolColumn({ tools, className, children }: { tools: Tool[]; className: string; children: React.ReactNode }) {
  return (
    <div className={`flex shrink-0 flex-col items-center bg-[#343434] pt-[5px] ${className}`}>
      {tools.map((tool) => (
        <button key={tool.label} type="button" aria-label={tool.label} className={`flex shrink-0 flex-col justify-end ${tool.h}`}>
          <span className={`flex h-[10px] items-center justify-center px-px ${tool.on ? 'bg-[#9fb0b9]' : tool.box ? 'bg-[#4c4c4c]' : ''}`}>
            {tool.icon === 'abc' ? <span className="text-[4px] leading-none text-[#a0a0a0]">abc</span> : <Glyph name={tool.icon} />}
          </span>
        </button>
      ))}
      <span className="flex-1" />
      {children}
    </div>
  );
}

function ScenePane() {
  return (
    <section className="flex min-w-0 flex-[430] flex-col bg-[#2b2b2b]">
      <PaneTabs tabs={['Scene View', 'Animation Editor', 'Render View', 'Composite View', 'Motion FX View', 'Geometry Spreadsheet']} />
      <div className="flex min-h-0 flex-1 flex-col pl-1">
        <PathBar extra />
        <div className="flex h-[15px] shrink-0 items-center border-y border-[#1b1b1b] bg-[#2d2d2d] text-[5px] font-bold text-[#dadada]">
          <Glyph name="viewAxis" className="ml-1 size-[7px]" />
          <span className="ml-[3px] flex-1">View</span>
          <IconButton name="axis" label="Tumble" className="w-[14px]" size="size-[7px]" />
          <IconButton name="axis2" label="Pan" className="w-[13px]" size="size-[7px]" />
          <IconButton name="axis3" label="Dolly" className="w-[13px]" size="size-[7px]" />
          <span className="flex-1" />
          <IconButton name="tree" label="Options" className="w-[11px]" size="size-[7px]" />
          <button type="button" aria-label="Help" className="flex w-[11px] justify-center"><CircleHelp className="size-[7px]" strokeWidth={3} /></button>
        </div>
        <div className="flex min-h-0 flex-1">
          <ToolColumn tools={sceneTools} className="w-[14px]">
            <IconButton name="chip" label="Snapshot" className="h-[10px]" size="size-[7px]" />
            <IconButton name="ball" label="Flipbook" className="mb-[2px] h-[10px]" size="size-[7px]" />
          </ToolColumn>
          <Viewport />
          <ToolColumn tools={displayTools} className="w-[11px]">
            <button type="button" aria-label="Info" className="flex h-[10px] items-center"><Info className="size-[7px] text-[#b7c2c7]" /></button>
            <IconButton name="yellowGrid" label="Grid" className="h-[10px] bg-[#9fb0b9] px-px" size="size-[7px]" />
            <IconButton name="snap" label="Display options" className="mb-px h-[10px]" size="size-[6px]" />
          </ToolColumn>
        </div>
      </div>
    </section>
  );
}

/* ---------- parameters ---------- */

const vectorParams = [
  { label: 'Translate', value: '0', icon: 'axis' },
  { label: 'Rotate', value: '0', icon: 'axis2' },
  { label: 'Scale', value: '1', icon: 'target' },
  { label: 'Pivot Translate', value: '0', icon: 'pivot' },
  { label: 'Pivot Rotate', value: '0', icon: 'pivot' },
];

const fieldClass = 'h-[9px] min-w-0 flex-1 bg-[#121212] px-[2px] font-mono text-[6px] leading-[9px] text-[#d6d6d6] outline-none';
const selectClass = 'h-[9px] appearance-none bg-linear-to-b from-[#555] to-[#474747] text-center text-[5px] leading-[9px] text-[#d0d0d0] outline-none';

function UpDown() {
  return (
    <svg viewBox="0 0 6 8" className="h-[6px] w-[5px]" aria-hidden="true">
      <path d="M3 0l2 3H1zM3 8l2-3H1z" fill="#bdbdbd" />
    </svg>
  );
}

function Select({ label, options, className }: { label: string; options: string[]; className: string }) {
  return (
    <span className={`flex items-center bg-[#3f3f3f] ${className}`}>
      <select aria-label={label} className={`min-w-0 flex-1 ${selectClass}`}>
        {options.map((o) => <option key={o}>{o}</option>)}
      </select>
      <span className="flex w-2 justify-center"><UpDown /></span>
    </span>
  );
}

function ParamPane() {
  const [name, setName] = useState('geo1');
  return (
    <section className="flex h-[196px] shrink-0 flex-col bg-[#3a3a3a]">
      <PaneTabs tabs={['geo1', 'Take List', 'Performance Monitor']} />
      <PathBar />
      <div className="flex h-[13px] shrink-0 items-center border-t border-[#1b1b1b] bg-[#343434] text-[5px] text-[#dadada]">
        <Glyph name="geo" className="ml-1 size-[7px]" />
        <label htmlFor="node-name" className="mr-[3px] ml-[2px] font-bold">Geometry</label>
        <input id="node-name" value={name} onChange={(e) => setName(e.target.value)} className="h-[10px] min-w-0 flex-1 bg-[#121212] px-[2px] font-mono text-[6px] outline-none" />
        <button type="button" aria-label="Gear menu" className="ml-[2px] flex w-[10px] justify-center"><Settings className="size-[7px] fill-[#ddd]" /></button>
        <IconButton name="binoc" label="Find" className="w-[10px]" size="size-[7px]" />
        <button type="button" aria-label="Search" className="flex w-[10px] justify-center"><Search className="size-[7px]" strokeWidth={3} /></button>
        <button type="button" aria-label="Info" className="flex w-[10px] justify-center"><Info className="size-[7px]" strokeWidth={3} /></button>
        <button type="button" aria-label="Help" className="flex w-[10px] justify-center"><CircleHelp className="size-[7px]" strokeWidth={3} /></button>
      </div>
      <div className="flex min-h-0 flex-1">
        <div className="flex min-w-0 flex-1 flex-col">
          <div className="mt-px flex h-[9px] gap-px border-b border-[#555] pl-[2px] text-[5px] leading-[8px] text-[#b5b5b5]">
            {['Transform', 'Render', 'Misc', 'Redshift OBJ'].map((tab, i) => (
              <button key={tab} type="button" className={`border-x border-t border-[#595959] px-[2px] ${i === 0 ? 'bg-[#3a3a3a]' : 'bg-[#464646]'}`}>{tab}</button>
            ))}
          </div>
          <div className="mt-[2px] flex flex-col gap-[2px] text-[5px] leading-[9px] text-[#c0c0c0]">
            <div className="flex items-center">
              <span className="w-[55px] text-right">Transform Order</span>
              <Select label="Transform order" options={['Scale Rot Trans']} className="ml-[7px] w-[52px]" />
              <Select label="Rotate order" options={['Rx Ry Rz']} className="ml-px w-[38px]" />
            </div>
            {vectorParams.map((p) => (
              <div key={p.label} className="flex items-center">
                <span className="mr-[7px] w-[55px] text-right">{p.label}</span>
                <div className="flex min-w-0 flex-1 gap-[2px]">
                  {['x', 'y', 'z'].map((axis) => (
                    <input key={axis} aria-label={`${p.label} ${axis}`} defaultValue={p.value} className={fieldClass} />
                  ))}
                </div>
                <IconButton name={p.icon} label={`${p.label} options`} className="w-[9px]" size="size-[6px]" />
                <span className="w-[2px]" />
              </div>
            ))}
            <div className="flex flex-col gap-px">
              <div className="flex items-center">
                <label htmlFor="uniform" className="mr-[7px] w-[55px] text-right">Uniform Scale</label>
                <input id="uniform" defaultValue="1" className={`${fieldClass} max-w-[93px]`} />
                <input
                  type="range"
                  aria-label="Uniform scale slider"
                  defaultValue={100}
                  className="ml-[2px] h-[9px] min-w-0 flex-1 appearance-none bg-transparent [&::-webkit-slider-runnable-track]:h-[2px] [&::-webkit-slider-runnable-track]:bg-[#10499b] [&::-webkit-slider-thumb]:-mt-[3px] [&::-webkit-slider-thumb]:h-2 [&::-webkit-slider-thumb]:w-[2px] [&::-webkit-slider-thumb]:appearance-none [&::-webkit-slider-thumb]:bg-[#a8a8a8]"
                />
                <span className="w-[2px]" />
              </div>
              <button type="button" className="ml-[62px] flex h-[9px] w-20 items-center bg-[#505050] text-[#d0d0d0]">
                <span className="flex-1">Modify Pre-Transform</span>
                <span className="h-full w-[9px] bg-[#3f3f3f] text-[5px]">▾</span>
              </button>
              <div className="ml-[62px] flex flex-col">
                {['Keep Position When Parenting', 'Child Compensation', 'Enable Constraints'].map((label) => (
                  <label key={label} className="flex items-center gap-[3px]">
                    <input type="checkbox" className="size-[5px] appearance-none bg-[#141414] checked:bg-[#4cb2e6]" />
                    {label}
                  </label>
                ))}
              </div>
            </div>
          </div>
        </div>
        <div className="flex w-[7px] shrink-0 flex-col border-l border-[#222] bg-[#1f1f1f] p-px text-[4px] leading-[6px] text-[#888]">
          <div className="flex h-[95px] items-center bg-[#4b4b4b]"><span className="h-1 w-full bg-[#2b2b2b]" /></div>
          <span className="flex-1" />
          <button type="button" aria-label="Scroll up" className="h-[7px] bg-[#3c3c3c]">▴</button>
          <button type="button" aria-label="Scroll down" className="h-[7px] bg-[#3c3c3c]">▾</button>
        </div>
      </div>
    </section>
  );
}

/* ---------- network editor ---------- */

const networkIcons = [
  { icon: 'wrench', w: 'w-[10px]' },
  { icon: 'treeW', w: 'w-[10px]' },
  { icon: 'square', w: 'w-[10px]' },
  { icon: 'palette', w: 'w-[10px] ml-[7px]' },
  { icon: 'cells', w: 'w-[10px]' },
  { icon: 'image', w: 'w-[10px] ml-[7px]' },
  { icon: 'note', w: 'w-[10px]' },
  { icon: 'world', w: 'w-[10px]' },
  { icon: 'basket', w: 'w-[10px]' },
];

function NetworkPane() {
  return (
    <section className="flex min-h-0 flex-1 flex-col bg-[#303030]">
      <PaneTabs tabs={['/obj', 'Tree View', 'Material Palette', 'Asset Browser']} />
      <PathBar />
      <div className="flex h-3 shrink-0 items-center border-b border-[#1b1b1b] bg-[#363636] pl-2 text-[5px] text-[#d0d0d0]">
        <nav className="flex gap-[6px]">
          {['Add', 'Edit', 'Go', 'View', 'Tools', 'Layout', 'Help'].map((m) => (
            <button key={m} type="button">{m}</button>
          ))}
        </nav>
        <span className="flex-1" />
        {networkIcons.map((n) => (
          <IconButton key={n.icon} name={n.icon} label={n.icon} className={n.w} size="size-[6px]" />
        ))}
        <button type="button" aria-label="Search" className="ml-[7px] flex w-[10px] justify-center"><Search className="size-[6px]" strokeWidth={3} /></button>
        <IconButton name="snap" label="Display options" className="w-[10px]" size="size-[6px]" />
      </div>
      <div className="flex min-h-0 flex-1 flex-col pt-[3px] pr-[5px] pb-[2px] pl-[4px]">
        <div className="flex min-h-0 flex-1 flex-col overflow-hidden border-3 border-[#fb0000]">
          <div className="-mr-[2px] self-end text-[9px] leading-[13px] font-bold text-[#555]">Objects</div>
          <p className="flex flex-1 items-center justify-center pt-1 text-xl text-[#f40000]">
            ここでTabキーを押します。
          </p>
        </div>
      </div>
    </section>
  );
}

/* ---------- playbar ---------- */

const frames = Array.from({ length: 64 }, (_, i) => i + 1);

function Playbar() {
  const btn = 'h-[11px] w-[11px] bg-[#474747]';
  const num = 'h-[9px] w-[17px] shrink-0 px-[2px] font-mono text-[6px] text-[#d6d6d6] outline-none';
  return (
    <footer className="flex h-[30px] shrink-0 items-center border-t-2 border-[#4a4a4a] bg-[#2c2c2c] pl-[6px]">
      <div className="flex w-[88px] shrink-0 flex-col gap-[3px]">
        <div className="flex items-center gap-px">
          <IconButton name="first" label="First frame" className={btn} size="size-2" />
          <IconButton name="rew" label="Play backward" className={btn} size="size-[6px]" />
          <IconButton name="stop" label="Stop" className="h-[11px] w-[11px] bg-[#9fb0b9]" size="size-[7px]" />
          <IconButton name="play" label="Play" className={btn} size="size-[6px]" />
          <IconButton name="last" label="Last frame" className={btn} size="size-2" />
          <input aria-label="Current frame" defaultValue="17" className="h-[11px] w-[19px] bg-[#121212] px-px font-mono text-[6px] text-[#e0e0e0]" />
          <IconButton name="rew" label="Step back" className="h-[9px] w-[5px] bg-[#474747]" size="size-1" />
          <IconButton name="play" label="Step forward" className="h-[9px] w-[5px] bg-[#474747]" size="size-1" />
        </div>
        <div className="flex items-center gap-px">
          <IconButton name="cloud" label="Simulation" className="h-[10px] w-[11px] bg-[#3a3a3a]" size="size-[7px]" />
          <IconButton name="speaker" label="Audio" className="h-[10px] w-[11px] bg-[#3a3a3a]" size="size-[7px]" />
          <IconButton name="loop" label="Loop" className="h-[10px] w-[11px] bg-[#3a3a3a]" size="size-[7px]" />
          <IconButton name="clock" label="Real time" className="h-[10px] w-[10px] bg-[#9fb0b9]" size="size-[8px]" />
          <IconButton name="tiny" label="Previous key" className="h-[10px] w-[9px] bg-[#333]" size="size-1" />
          <IconButton name="tiny" label="Next key" className="h-[10px] w-[9px] bg-[#333]" size="size-1 rotate-180" />
        </div>
      </div>
      <div className="flex min-w-0 flex-1 flex-col gap-[3px]">
        <div className="grid h-[13px] auto-cols-fr grid-flow-col">
          {frames.map((f) => (
            <div key={f} className="flex min-w-0 flex-col items-center">
              {f === 17 ? (
                <span className="z-10 -mt-px flex h-[9px] w-3 justify-center rounded-b-[3px] border border-[#bdbdbd] bg-[#0c0c0c] text-[6px] leading-[7px] font-bold text-[#e5e5e5]">17</span>
              ) : (
                <span className={`h-[6px] text-[4px] leading-[5px] ${f % 15 === 0 ? 'font-bold text-[#9d9d9d]' : 'text-[#7a7a7a]'}`}>{f}</span>
              )}
              {f === 17 ? (
                <span className="h-1 w-px bg-[#bdbdbd]" />
              ) : (
                <span className="flex h-[6px] w-full items-center justify-center">
                  <span className="h-px flex-1 bg-[#6d6d6d]" />
                  <span className={`w-px bg-[#8a8a8a] ${f % 15 === 0 ? 'h-[6px]' : 'h-1'}`} />
                  <span className="h-px flex-1 bg-[#6d6d6d]" />
                </span>
              )}
            </div>
          ))}
        </div>
        <div className="flex items-center gap-[2px] pl-1">
          <input aria-label="Global start" defaultValue="1" className={`bg-[#232323] ${num}`} />
          <input aria-label="Range start" defaultValue="1" className={`bg-[#121212] ${num}`} />
          <div className="flex min-w-0 flex-1 items-center">
            <Glyph name="play" className="size-1" />
            <span className="h-px flex-1 bg-[#808080]" />
            <Glyph name="rew" className="size-1" />
          </div>
          <input aria-label="Range end" defaultValue="64" className={`bg-[#121212] ${num}`} />
          <input aria-label="Global end" defaultValue="64" className={`bg-[#232323] ${num}`} />
        </div>
      </div>
      <button type="button" aria-label="Set key" className="ml-1 flex size-4 shrink-0 items-center justify-center rounded-full border border-[#3f3f3f] bg-[#282828]">
        <KeyRound className="size-[7px] text-[#6d6d6d]" />
      </button>
      <button type="button" aria-label="Key menu" className="mr-[3px] h-2 w-[6px] bg-[#333] text-[5px] leading-[7px] text-[#bbb]">▾</button>
      <div className="flex shrink-0 flex-col gap-[3px]">
        <IconButton name="keys" label="Channel list" className="size-[9px] bg-[#444]" size="size-[7px]" />
        <IconButton name="bars" label="Channel groups" className="size-[9px] border border-[#555] bg-[#161616]" size="size-[7px]" />
      </div>
      <div className="mr-[2px] ml-[2px] flex w-16 shrink-0 flex-col gap-[3px]">
        <button type="button" className="flex h-[9px] items-center bg-[#505050] text-[5px] leading-none text-[#cfcfcf]">
          <span className="flex-1">0 keys, 0/0 channels</span>
          <span className="w-[7px] text-[5px]">▴</span>
        </button>
        <Select label="Key scope" options={['Key All Channels']} className="w-full" />
      </div>
    </footer>
  );
}

/* ---------- application ---------- */

export default function App() {
  return (
    <div className="flex h-screen flex-col overflow-hidden bg-[#1c1c1c] font-['Noto_Sans_CJK_JP',Lato,sans-serif] text-[#c8c8c8]">
      <header className="flex h-[9px] shrink-0 items-center bg-white text-[7px] leading-none text-[#222]">
        <svg viewBox="0 0 16 16" className="ml-px mr-[2px] size-[7px]" aria-hidden="true">
          <path d="M0 0h16v16H0z" fill="#e8602a" />
          <path d="M2 10a6 6 0 1 1 11 1M5 10a3 3 0 1 1 4 3" stroke="#fff" strokeWidth="2" fill="none" />
        </svg>
        <h1 className="flex-1 font-['Noto_Sans_CJK_JP',sans-serif] text-[5px]">D:/ijichi/houdini/Projects/SegaTechBlog2/01_processAndRest01.hip - Houdini FX 17.0.416</h1>
        <button type="button" aria-label="Minimize" className="flex w-[19px] justify-center"><Minus className="size-[6px]" /></button>
        <button type="button" aria-label="Restore" className="flex w-[19px] justify-center"><Copy className="size-[5px]" /></button>
        <button type="button" aria-label="Close" className="flex w-[19px] justify-center"><X className="size-[6px]" /></button>
      </header>

      <div className="flex h-[11px] shrink-0 items-center border-t border-[#555] bg-[#303030] pl-[7px] text-[5px] leading-none">
        <nav className="flex w-[132px] gap-1">
          {['File', 'Edit', 'Render', 'Assets', 'Windows', 'Redshift', 'Help'].map((m) => (
            <button key={m} type="button">{m}</button>
          ))}
        </nav>
        <button type="button" className="flex h-[9px] w-[52px] items-center gap-[2px] bg-[#454545] px-[2px]">
          <svg viewBox="0 0 16 16" className="size-[6px]" aria-hidden="true"><path d="M1 1h14v14H1zM6 1v14M6 8h9" stroke="#bbb" strokeWidth="2" fill="none" /></svg>
          <span className="flex-1 text-left">Build</span>
          <UpDown />
        </button>
        <button type="button" className="ml-[2px] flex h-[9px] w-[52px] items-center gap-[2px] bg-[#454545] px-[2px]">
          <svg viewBox="0 0 16 16" className="size-[6px]" aria-hidden="true"><path d="M8 1l7 7-7 7-7-7zM8 5v6M5 8h6" stroke="#bbb" strokeWidth="1.500" fill="none" /></svg>
          <span className="flex-1 text-left">Main</span>
          <UpDown />
        </button>
        <span className="flex-1" />
        <button type="button" className="flex h-[9px] w-[70px] items-center gap-[2px] bg-[#454545] px-[2px]">
          <Glyph name="camera" className="size-[7px]" />
          <span className="flex-1 text-left">Main</span>
          <UpDown />
        </button>
        <button type="button" aria-label="Help" className="flex w-[14px] justify-center"><CircleHelp className="size-[7px] text-white" strokeWidth={3} /></button>
      </div>

      <div className="flex h-6 shrink-0">
        <Shelf tabs={leftTabs} tools={leftTools} className="flex-[373]" toolsClass="pl-[2px]" />
        <Shelf tabs={rightTabs} tools={rightTools} className="flex-[427]" />
      </div>

      <main className="flex min-h-0 flex-1">
        <ScenePane />
        <div className="w-[3px] shrink-0 border-x border-[#151515] bg-[#4a4a4a]" />
        <div className="flex min-w-0 flex-[367] flex-col">
          <ParamPane />
          <div className="h-[2px] shrink-0 bg-[#4d4d4d]" />
          <NetworkPane />
        </div>
      </main>

      <Playbar />
      <div className="flex h-3 shrink-0 flex-col bg-[#171717]">
        <div className="flex h-[11px] items-center justify-end text-[5px]">
          <div className="flex h-[10px] items-center bg-[#333] pl-[2px] pr-px">
            <IconButton name="cloud" label="Messages" className="w-[11px]" size="size-[7px]" />
            <button type="button" aria-label="Recook" className="mr-[3px] flex w-[9px] justify-center"><RefreshCw className="size-[6px] text-[#666]" /></button>
            <Select label="Update mode" options={['Auto Update']} className="w-[47px]" />
          </div>
        </div>
        <div className="ml-5 h-px w-36 bg-[#b8b4b4]" />
      </div>
    </div>
  );
}
